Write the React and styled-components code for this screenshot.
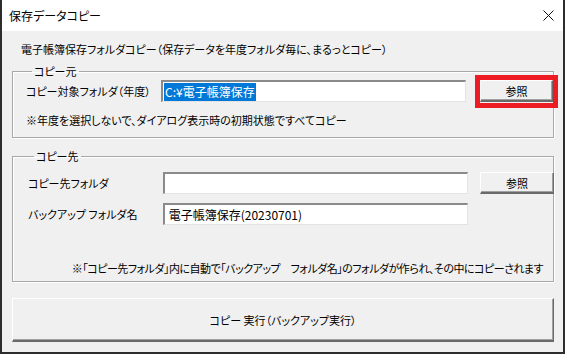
import React from "react";
import styled, { createGlobalStyle } from "styled-components";

const FONT = `"Noto Sans CJK JP", "Noto Sans", sans-serif`;

const GlobalStyle = createGlobalStyle`
  html, body {
    margin: 0;
    padding: 0;
    background: #f0f0f0;
  }
  body {
    font-family: ${FONT};
    font-feature-settings: "palt";
    color: #000;
  }
`;

const Window = styled.div`
  width: 565px;
  height: 354px;
  box-sizing: border-box;
  display: flex;
  flex-direction: column;
  background: #f0f0f0;
  border: 2px solid #2d2d2d;
  border-top: none;
  overflow: hidden;
`;

const TitleBar = styled.div`
  height: 31px;
  flex: none;
  display: flex;
  align-items: center;
  justify-content: space-between;
  background: #fff;
  padding: 0 9px 0 7px;
  font-size: 12px;
`;

const CloseIcon = () => (
  <svg width="11" height="11" viewBox="0 0 11 11">
    <path d="M0.5 0.5 L10.5 10.5 M10.5 0.5 L0.5 10.5" stroke="#111" strokeWidth="1" fill="none" />
  </svg>
);

const Body = styled.div`
  flex: 1;
  display: flex;
  flex-direction: column;
  padding: 10px 9px 0 10px;
  font-size: 11px;
`;

const Description = styled.div`
  line-height: 16px;
  padding-left: 9px;
  white-space: nowrap;
`;

const Group = styled.fieldset`
  margin: ${(p) => p.$top}px 0 0;
  padding: ${(p) => p.$padTop}px 10px ${(p) => p.$padBottom}px ${(p) => p.$inset}px;
  border: 1px solid #a8a8a8;
  box-shadow: inset 1px 1px 0 #fff, 1px 1px 0 #fff;
  display: flex;
  flex-direction: column;
  min-width: 0;
`;

const Legend = styled.legend`
  margin-left: 6px;
  padding: 0 2px;
  line-height: 14px;
  font-size: 11px;
`;

const Row = styled.div`
  display: flex;
  align-items: center;
  height: 22px;
  & + & {
    margin-top: 9px;
  }
`;

const Label = styled.div`
  width: 135px;
  flex: none;
  line-height: 16px;
  white-space: nowrap;
`;

const TextBox = styled.div`
  width: 305px;
  height: 22px;
  box-sizing: border-box;
  flex: none;
  background: #fff;
  border-top: 2px solid #8a8a8a;
  border-left: 2px solid #8a8a8a;
  border-right: 1px solid #e3e3e3;
  border-bottom: 1px solid #e3e3e3;
  display: flex;
  align-items: center;
  padding-left: 1px;
  white-space: nowrap;
  font-size: 12px;
`;

const Selected = styled.span`
  background: #0078d7;
  color: #fff;
  line-height: 18px;
  padding: 0 1px;
`;

const ButtonSlot = styled.div`
  position: relative;
  margin-left: ${(p) => p.$gap}px;
  display: flex;
`;

const Button = styled.button`
  font-family: ${FONT};
  font-feature-settings: "palt";
  font-size: 11px;
  color: #000;
  width: ${(p) => p.$w}px;
  height: ${(p) => p.$h}px;
  padding: 0;
  background: #f0f0f0;
  border: none;
  border-top: 1px solid #fff;
  border-left: 1px solid #fff;
  border-right: 1px solid #6a6a6a;
  border-bottom: 2px solid #6a6a6a;
  box-shadow: inset -1px -1px 0 #a0a0a0;
  cursor: default;
`;

const Highlight = styled.div`
  position: absolute;
  left: -5px;
  top: -5px;
  right: -5px;
  bottom: -6px;
  border: 5px solid #ed1c24;
  pointer-events: none;
`;

const Note = styled.div`
  line-height: 16px;
  margin-top: ${(p) => p.$top}px;
  text-align: ${(p) => p.$align || "left"};
  letter-spacing: ${(p) => p.$tight ? "-0.5px" : "normal"};
  white-space: nowrap;
`;

const BigButton = styled(Button)`
  width: 542px;
  height: 44px;
  margin-top: 16px;
  flex: none;
`;

export default function App() {
  return (
    <>
      <GlobalStyle />
      <Window>
        <TitleBar>
          <span>保存データコピー</span>
          <CloseIcon />
        </TitleBar>
        <Body>
          <Description>
            電子帳簿保存フォルダコピー（保存データを年度フォルダ毎に、まるっとコピー）
          </Description>

          <Group $top={7} $padTop={2} $padBottom={9} $inset={13}>
            <Legend>コピー元</Legend>
            <Row>
              <Label>コピー対象フォルダ（年度）</Label>
              <TextBox>
                <Selected>C:¥電子帳簿保存</Selected>
              </TextBox>
              <ButtonSlot $gap={14}>
                <Button $w={73} $h={22}>参照</Button>
                <Highlight />
              </ButtonSlot>
            </Row>
            <Note $top={10}>※年度を選択しないで、ダイアログ表示時の初期状態ですべてコピー</Note>
          </Group>

          <Group $top={11} $padTop={9} $padBottom={5} $inset={15}>
            <Legend>コピー先</Legend>
            <Row>
              <Label>コピー先フォルダ</Label>
              <TextBox />
              <ButtonSlot $gap={12}>
                <Button $w={74} $h={22}>参照</Button>
              </ButtonSlot>
            </Row>
            <Row>
              <Label>バックアップ フォルダ名</Label>
              <TextBox>&nbsp;電子帳簿保存(20230701)</TextBox>
            </Row>
            <Note $top={35} $align="right" $tight>
              ※「コピー先フォルダ」内に自動で「バックアップ　フォルダ名」のフォルダが作られ、その中にコピーされます
            </Note>
          </Group>

          <BigButton>コピー 実行（バックアップ実行）</BigButton>
        </Body>
      </Window>
    </>
  );
}
